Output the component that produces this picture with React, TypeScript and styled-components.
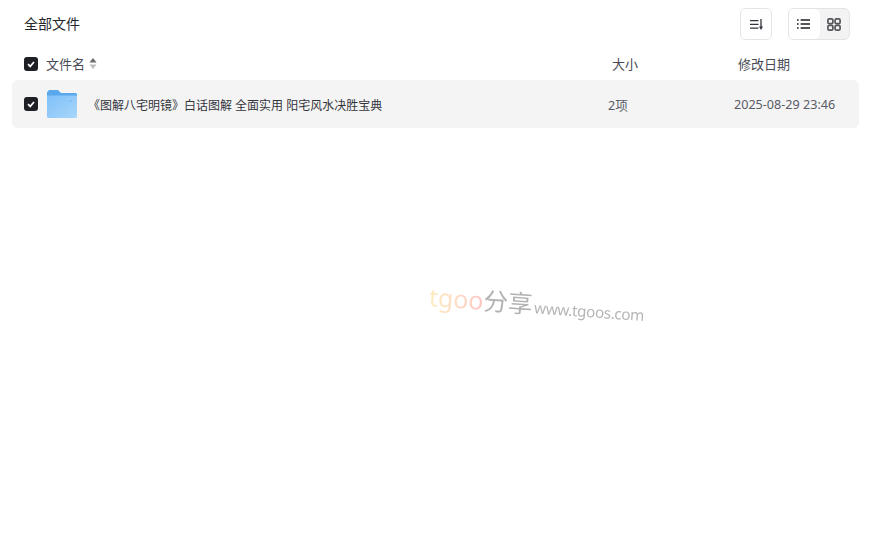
import React from "react";
import styled, { createGlobalStyle } from "styled-components";

const GlobalStyle = createGlobalStyle`
  html, body {
    margin: 0;
    padding: 0;
    background: #fff;
    font-family: "Noto Sans", "Noto Sans CJK SC", sans-serif;
  }
`;

const Page = styled.div`
  position: relative;
  width: 874px;
  height: 538px;
  overflow: hidden;
  padding: 8px 15px 0 12px;
  box-sizing: border-box;
`;

const TopBar = styled.div`
  display: flex;
  align-items: center;
  justify-content: space-between;
  height: 32px;
  padding: 0 9px 0 12px;
`;

const Title = styled.div`
  font-size: 14px;
  line-height: 16px;
  padding-bottom: 1px;
  color: #25262b;
`;

const Tools = styled.div`
  display: flex;
  gap: 16px;
`;

const SortButton = styled.div`
  width: 30px;
  height: 30px;
  border: 1px solid #e4e4e7;
  border-radius: 6px;
  display: flex;
  align-items: center;
  justify-content: center;
`;

const ViewSwitch = styled.div`
  display: flex;
  width: 60px;
  height: 30px;
  border: 1px solid #e4e4e7;
  border-radius: 6px;
  background: #f3f3f4;
  overflow: hidden;
`;

const ViewOption = styled.div<{ $active?: boolean }>`
  flex: 1;
  display: flex;
  align-items: center;
  justify-content: center;
  padding-right: ${(p) => (p.$active ? "1px" : "0")};
  background: ${(p) => (p.$active ? "#fff" : "transparent")};
  border-radius: 0 6px 6px 0;
`;

const Columns = styled.div`
  display: grid;
  grid-template-columns: 588px 126px 1fr;
  align-items: center;
  height: 40px;
  padding: 7px 0 0 12px;
  box-sizing: border-box;
  font-size: 13px;
  color: #484a55;
`;

const NameHead = styled.div`
  display: flex;
  align-items: center;
`;

const Check = styled.div`
  width: 14px;
  height: 14px;
  border-radius: 3px;
  background: #1e1f25;
  display: flex;
  align-items: center;
  justify-content: center;
  flex-shrink: 0;
`;

const HeadLabel = styled.span`
  margin-left: 8px;
`;

const SortCaret = styled.svg`
  margin-left: 4px;
`;

const Row = styled.div`
  display: grid;
  grid-template-columns: 584px 126px 1fr;
  align-items: center;
  height: 48px;
  padding-left: 12px;
  border-radius: 6px;
  background: #f4f4f4;
  font-size: 12.6px;
  color: #595b66;
`;

const NameCell = styled.div`
  display: flex;
  align-items: center;
`;

const FolderIcon = styled.svg`
  margin-left: 9px;
  margin-right: 11px;
  flex-shrink: 0;
`;

const FileName = styled.span`
  font-size: 12px;
  padding-top: 1px;
  color: #33343c;
  white-space: nowrap;
`;

const Watermark = styled.div`
  position: absolute;
  left: 429px;
  top: 280px;
  display: flex;
  align-items: baseline;
  transform: rotate(4deg);
  transform-origin: left center;
  white-space: nowrap;
  opacity: 0.65;
  line-height: 32px;
`;

const Brand = styled.span`
  font-size: 25px;
  background: linear-gradient(90deg, #fde39c 0%, #fdc9a5 50%, #fba6a0 100%);
  -webkit-background-clip: text;
  background-clip: text;
  color: transparent;
`;

const BrandCn = styled.span`
  font-size: 24.5px;
  color: #8a8a8a;
`;

const BrandUrl = styled.span`
  font-size: 15.3px;
  margin-left: 2px;
  color: #8f8f8f;
  letter-spacing: -0.4px;
`;

const Tick = () => (
  <svg width="10" height="10" viewBox="0 0 10 10" fill="none">
    <path d="M2 5.2 4.2 7.4 8 3" stroke="#fff" strokeWidth="1.7" />
  </svg>
);

export default function App() {
  return (
    <Page>
      <GlobalStyle />
      <TopBar>
        <Title>全部文件</Title>
        <Tools>
          <SortButton>
            <svg width="14" height="11" viewBox="0 0 14 11" fill="none" stroke="#33343c" strokeWidth="1.3">
              <path d="M1 1.6h8.5M1 5.4h8.5M1 9.2h8.5M12 0v9" />
              <path d="M10 7.6h4L12 11z" fill="#33343c" stroke="none" />
            </svg>
          </SortButton>
          <ViewSwitch>
            <ViewOption $active>
              <svg width="13" height="10" viewBox="0 0 13 10" fill="none" stroke="#1e1f25" strokeWidth="1.3">
                <path d="M0 1h1.6M0 5h1.6M0 9h1.6M3.6 1H13M3.6 5H13M3.6 9H13" />
              </svg>
            </ViewOption>
            <ViewOption>
              <svg width="14" height="13" viewBox="0 0 14 13" fill="none" stroke="#55555a" strokeWidth="1.7">
                <rect x="0.9" y="0.9" width="5" height="4.8" rx="1.4" />
                <rect x="8.1" y="0.9" width="5" height="4.8" rx="1.4" />
                <rect x="0.9" y="7.3" width="5" height="4.8" rx="1.4" />
                <rect x="8.1" y="7.3" width="5" height="4.8" rx="1.4" />
              </svg>
            </ViewOption>
          </ViewSwitch>
        </Tools>
      </TopBar>
      <Columns>
        <NameHead>
          <Check>
            <Tick />
          </Check>
          <HeadLabel>文件名</HeadLabel>
          <SortCaret width="8" height="11" viewBox="0 0 8 11">
            <path d="M4 0 7.6 4.6H.4z" fill="#6d6d6d" />
            <path d="M4 11 7.6 6.4H.4z" fill="#bdbdbd" />
          </SortCaret>
        </NameHead>
        <div>大小</div>
        <div>修改日期</div>
      </Columns>
      <Row>
        <NameCell>
          <Check>
            <Tick />
          </Check>
          <FolderIcon width="30" height="28" viewBox="0 0 30 28">
            <defs>
              <linearGradient id="folderFront" x1="0" y1="0" x2="1" y2="1">
                <stop offset="0" stopColor="#7fc0f8" />
                <stop offset="1" stopColor="#a9d6fb" />
              </linearGradient>
            </defs>
            <path d="M1 1.5A1.5 1.5 0 0 1 2.5 0H11l3 3h14.5A1.5 1.5 0 0 1 30 4.5V8H0V2z" fill="#5aa8ec" />
            <path d="M0 5.5h28.5A1.5 1.5 0 0 1 30 7v19.5a1.5 1.5 0 0 1-1.5 1.5H1.5A1.5 1.5 0 0 1 0 26.5z" fill="url(#folderFront)" />
            <path d="M22 11h3" stroke="#6fb2ee" strokeWidth="1" />
          </FolderIcon>
          <FileName>《图解八宅明镜》白话图解 全面实用 阳宅风水决胜宝典</FileName>
        </NameCell>
        <div>2项</div>
        <div>2025-08-29 23:46</div>
      </Row>
      <Watermark>
        <Brand>tgoo</Brand>
        <BrandCn>分享</BrandCn>
        <BrandUrl>www.tgoos.com</BrandUrl>
      </Watermark>
    </Page>
  );
}
